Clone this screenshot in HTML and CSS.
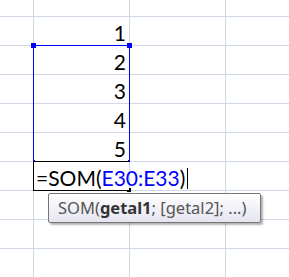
FILE: index.html
```html
<!DOCTYPE html>
<html lang="nl">
<head>
    <meta charset="UTF-8">
    <title>Sheet</title>
    <link rel="stylesheet" href="styles.css">
</head>
<body>
    <div class="sheet">
        <div class="grid">
            <div class="cell"></div><div class="cell"></div><div class="cell"></div><div class="cell"></div>
            <div class="cell"></div><div class="cell num">1</div><div class="cell"></div><div class="cell"></div>
            <div class="cell"></div><div class="cell num">2</div><div class="cell"></div><div class="cell"></div>
            <div class="cell"></div><div class="cell num">3</div><div class="cell"></div><div class="cell"></div>
            <div class="cell"></div><div class="cell num">4</div><div class="cell"></div><div class="cell"></div>
            <div class="cell"></div><div class="cell num">5</div><div class="cell"></div><div class="cell"></div>
            <div class="cell"></div><div class="cell edit">=SOM(<span class="ref">E30:E33</span>)<span class="caret"></span></div><div class="cell"></div><div class="cell"></div>
            <div class="cell"></div><div class="cell"></div><div class="cell"></div><div class="cell"></div>
            <div class="cell"></div><div class="cell"></div><div class="cell"></div><div class="cell"></div>
            <div class="cell"></div><div class="cell"></div><div class="cell"></div><div class="cell"></div>
        </div>

        <!-- range highlight -->
        <div class="range">
            <span class="handle tl"></span>
            <span class="handle tr"></span>
            <span class="dot bl"></span>
            <span class="dot br"></span>
        </div>

        <!-- edit cell border -->
        <div class="edit-box"><span class="fill"></span></div>

        <!-- function tooltip -->
        <div class="tip">SOM(<b>getal1</b>; [getal2]; ...)</div>
    </div>
</body>
</html>
```

FILE: styles.css
```css
* {
    margin: 0;
    padding: 0;
    box-sizing: border-box;
}

body {
    background: #fff;
    font-family: Lato, "Open Sans", sans-serif;
    overflow: hidden;
}

.sheet {
    position: relative;
    width: 289px;
    height: 277px;
    overflow: hidden;
}

.grid {
    display: grid;
    grid-template-columns: 33px 95px 95px 1fr;
    grid-template-rows: 16px repeat(9, 28px);
    gap: 1px;
    background: #d0d7e5;
}

.cell {
    background: #fff;
}

.num {
    font-size: 21px;
    text-align: right;
    padding-right: 3px;
    line-height: 32px;
    color: #000;
}

.edit {
    position: relative;
    z-index: 2;
    font-size: 21px;
    line-height: 32px;
    padding-left: 2px;
    white-space: nowrap;
    overflow: visible;
    color: #000;
}

.edit .ref {
    color: #0000ff;
}

.caret {
    display: inline-block;
    width: 1px;
    height: 21px;
    background: #000;
    vertical-align: -3px;
    margin-left: 2px;
}

/* overlays */
.range {
    position: absolute;
    left: 33px;
    top: 45px;
    width: 97px;
    height: 117px;
    border: 1px solid #0000ff;
    border-bottom-color: #ffff00;
}

.handle {
    position: absolute;
    width: 5px;
    height: 5px;
    background: #0000ff;
    top: -3px;
}

.handle.tl { left: -3px; }
.handle.tr { right: -3px; }

.dot {
    position: absolute;
    width: 2px;
    height: 2px;
    background: #0000ff;
    bottom: -1px;
}

.dot.bl { left: -1px; }
.dot.br { right: -1px; }

.edit-box {
    position: absolute;
    left: 33px;
    top: 161px;
    width: 97px;
    height: 30px;
    border-left: 2px solid #000;
    border-bottom: 2px solid #000;
    border-top: 1px solid #000;
}

.edit-box .fill {
    position: absolute;
    right: -1px;
    bottom: -3px;
    width: 4px;
    height: 4px;
    background: #000;
}

.tip {
    position: absolute;
    left: 48px;
    top: 193px;
    width: 213px;
    height: 30px;
    border: 1px solid #767676;
    border-radius: 2px;
    background: linear-gradient(#ffffff, #e4e5f0);
    box-shadow: 2px 2px 2px rgba(0, 0, 0, 0.3);
    font-family: "Noto Sans", "Open Sans", sans-serif;
    font-size: 16.5px;
    line-height: 27px;
    padding-left: 9px;
    color: #555;
    white-space: nowrap;
}

.tip b {
    color: #333;
}
```
